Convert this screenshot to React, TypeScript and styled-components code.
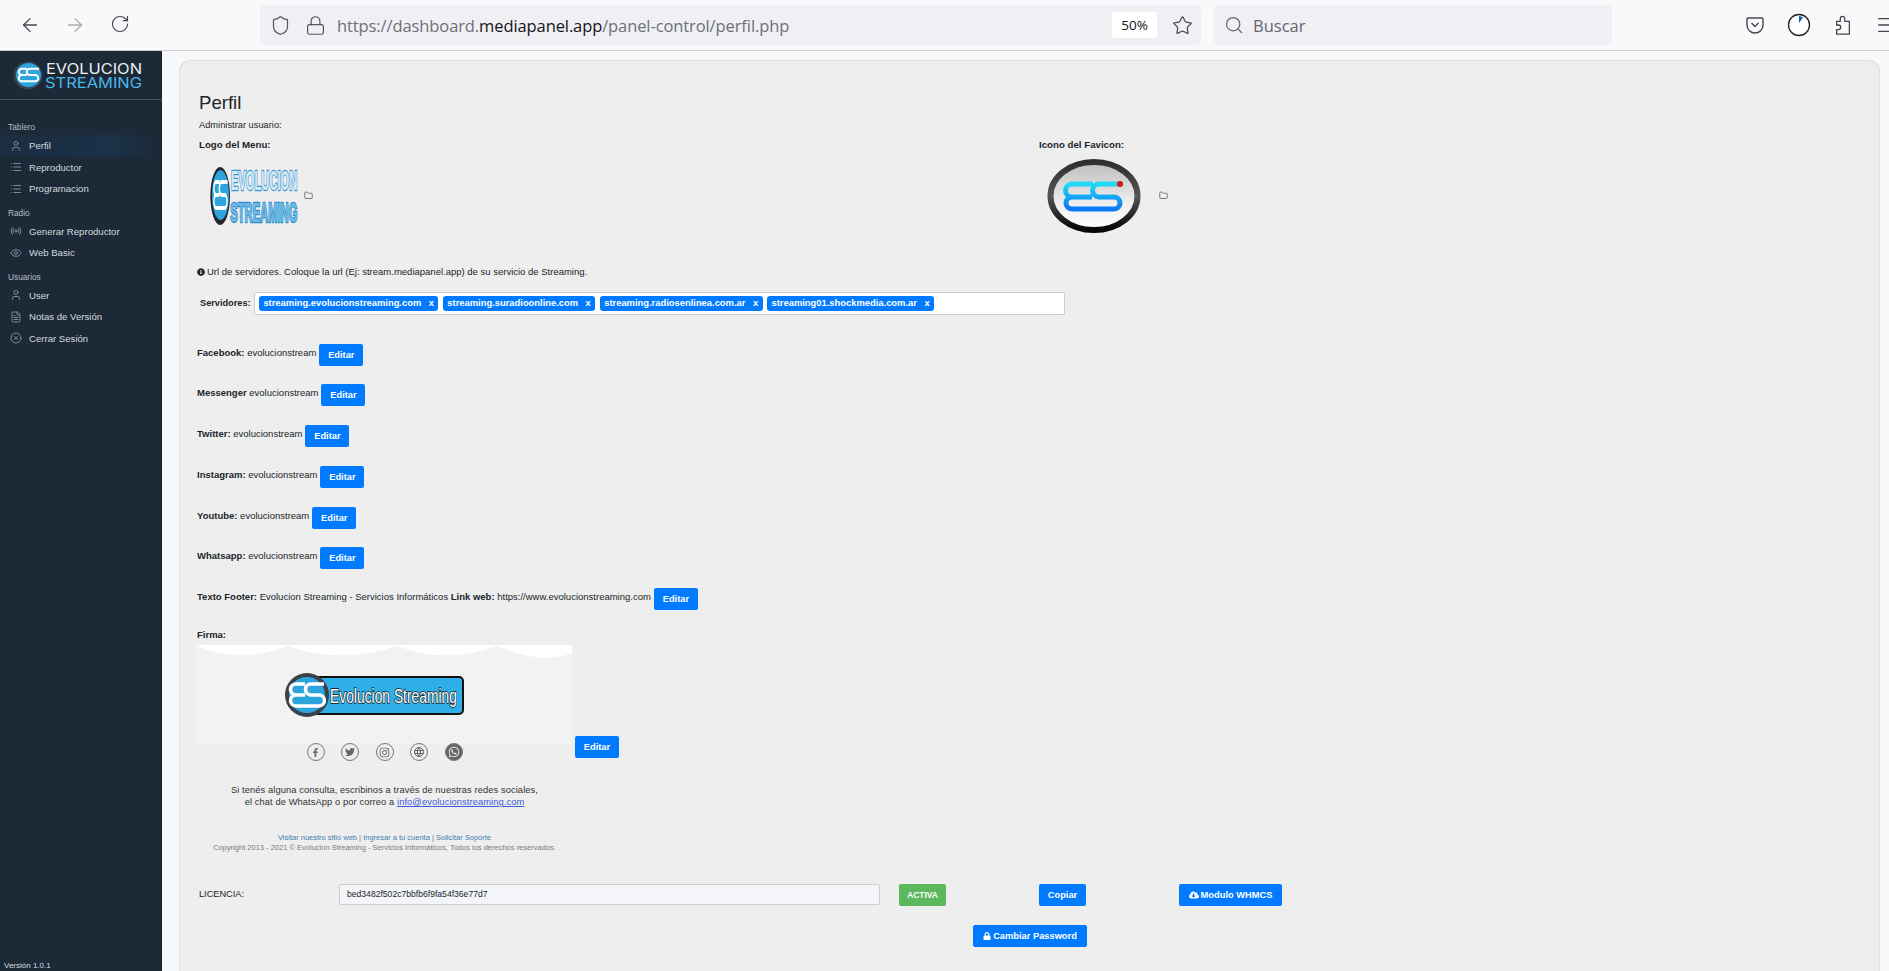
import React from "react";
import styled, { createGlobalStyle } from "styled-components";
import { ArrowLeft, ArrowRight, RotateCw, Shield, Lock, Star, Search, User, List, Radio, Eye, FileText, CircleX, Folder, Menu } from "lucide-react";
import { FaFacebookF, FaTwitter, FaInstagram, FaWhatsapp, FaInfoCircle, FaCloudDownloadAlt, FaLock } from "react-icons/fa";
import { TbWorld } from "react-icons/tb";

const Global = createGlobalStyle`
  html, body { margin: 0; padding: 0; height: 100%; overflow: hidden; background: #f8f9fb; }
  body { font-family: "Liberation Sans", Arial, sans-serif; color: #212529; }
  * { box-sizing: border-box; }
`;

const Page = styled.div`
  width: 1889px; height: 971px; display: flex; flex-direction: column; overflow: hidden;
`;
const Toolbar = styled.header`
  height: 51px; flex: none; display: flex; align-items: center; background: #f9f9fb;
  border-bottom: 1px solid #cfcfd3; color: #44444c; overflow: hidden;
`;
const NavButton = styled.span<{ $faded?: boolean }>`
  width: 45px; display: flex; justify-content: center; color: ${p => (p.$faded ? "#a9a9ad" : "#45454c")};
`;
const NavGroup = styled.div`
  display: flex; flex: none; padding-left: 7px; width: 260px;
`;
const UrlBar = styled.div`
  width: 941px; flex: none; height: 40px; background: #f0f0f4; border-radius: 5px; display: flex; align-items: center; padding-left: 10px;
`;
const UrlIcon = styled.span<{ $w: number }>`
  display: flex; flex: none; width: ${p => p.$w}px; color: #55555c;
`;
const UrlText = styled.div`
  font-family: "Open Sans", sans-serif; font-size: 16.5px; color: #6f6f76; flex: 1; white-space: nowrap; margin-left: 1px; letter-spacing: -0.1px;
  b { font-weight: 400; color: #15141a; }
`;
const ZoomBadge = styled.span`
  width: 45px; flex: none; height: 26px; background: #fff; border-radius: 3px; font-family: "Open Sans", sans-serif; font-size: 13.5px; color: #15141a;
  display: flex; align-items: center; justify-content: center;
`;
const StarBox = styled.span`
  display: flex; flex: none; width: 38px; margin-left: 6px; justify-content: center; color: #4a4a50;
`;
const SearchBar = styled.div`
  width: 398px; flex: none; height: 40px; margin-left: 13px; background: #f0f0f4; border-radius: 5px; display: flex; align-items: center; padding-left: 10px; gap: 9px;
  font-family: "Open Sans", sans-serif; font-size: 16.5px; color: #66666d;
`;
const ToolIcons = styled.div`
  display: flex; flex: none; align-items: center; margin-left: 133px; gap: 22px; color: #45454c;
  svg { flex: none; }
`;
const Main = styled.div`
  flex: 1; display: flex; min-height: 0;
`;
const Sidebar = styled.aside`
  width: 162px; flex: none; background: #1c2936; color: #d8dde2; display: flex; flex-direction: column; font-size: 9.6px;
`;
const Brand = styled.div`
  height: 49px; border-bottom: 1px solid #46525d; padding: 8px 0 0 13px; margin-bottom: 20px;
`;
const NavTitle = styled.div<{ $first?: boolean }>`
  font-size: 8.3px; color: #b5bdc5; padding-left: 8px; height: 14px; line-height: 12px; margin-top: ${p => (p.$first ? 1 : 7)}px;
`;
const NavItem = styled.div<{ $active?: boolean }>`
  height: 21.5px; display: flex; align-items: center; padding-left: 10px; gap: 7px; color: #d3d9df;
  background: ${p => (p.$active ? "linear-gradient(90deg, #1b2d41, #1a3147 70%, #1c2936)" : "transparent")};
  svg { color: #7e8a95; }
`;
const Version = styled.div`
  margin-top: auto; font-size: 8px; padding: 0 0 1px 4px; color: #d8dde2;
`;
const Content = styled.main`
  flex: 1; padding: 10px 10px 0 18px; min-width: 0;
`;
const Card = styled.section`
  background: #eeeeee; border-radius: 10px 10px 0 0; height: 1000px; padding: 32px 0 0 17px;
  box-shadow: 0 0 2px rgba(0, 0, 0, .35); font-size: 9.5px; line-height: 12px;
`;
const Title = styled.h3`
  margin: 0 0 6px 2px; font-weight: 400; font-size: 18.6px; line-height: 20px; color: #212529;
`;
const Note = styled.div`
  margin-left: 2px; font-size: 9.3px;
`;
const LogoGrid = styled.div`
  display: grid; grid-template-columns: 840px 300px; margin: 8px 0 0 2px;
`;
const Strong = styled.span`
  font-weight: 700;
`;
const FieldTitle = styled(Strong)`
  font-size: 9.7px;
`;
const ImageRow = styled.div<{ $inset: number; $gap: number }>`
  height: 74px; margin-top: 7.5px; display: flex; align-items: center; padding-left: ${p => p.$inset}px; gap: ${p => p.$gap}px;
  svg.folder { color: #555; }
`;
const Hint = styled.div`
  display: flex; align-items: center; gap: 2px; margin-top: 33px; font-size: 9.5px; height: 12px;
  svg { color: #212529; }
`;
const ServerRow = styled.div`
  display: flex; align-items: center; margin-top: 14px;
`;
const ServerLabel = styled(Strong)`
  width: 57px; padding-left: 3px; font-size: 9.2px;
`;
const TagBox = styled.div`
  width: 811px; height: 23px; background: #fff; border: 1px solid #c9ccd0; border-radius: 2px; display: flex; align-items: center; padding-left: 4px; gap: 4.6px;
`;
const Tag = styled.span`
  height: 15px; border-radius: 3px; background: #007bff; color: #fff; font-weight: 700; font-size: 9.4px; display: flex; align-items: center; padding: 0 4.4px; white-space: nowrap;
  i { font-style: normal; margin-left: 7.500px; }
`;
const Socials = styled.div`
  display: flex; flex-direction: column; gap: 18.8px; margin-top: 29px;
`;
const SocialRow = styled.div`
  display: flex; align-items: center; height: 22px; gap: 3px; font-size: 9.5px;
`;
const SocialValue = styled.span`
  position: relative; top: -2px;
`;
const BlueButton = styled.button`
  height: 22px; border: 0; border-radius: 2px; background: #007bff; color: #fff; font: 700 9.3px "Liberation Sans", Arial, sans-serif; padding: 0; white-space: nowrap;
  display: inline-flex; align-items: center; justify-content: center; gap: 2px;
`;
const EditButton = styled(BlueButton)`
  width: 44px;
`;
const SignatureLabel = styled(Strong)`
  display: block; margin-top: 19px;
`;
const SignatureRow = styled.div`
  display: flex; gap: 3px; margin-top: 4px;
`;
const SignatureBody = styled.div`
  width: 375px; text-align: center;
`;
const Banner = styled.svg`
  display: block; width: 375px; height: 99px;
`;
const SocialIcons = styled.div`
  display: flex; justify-content: center; gap: 16.5px; height: 16px; align-items: center;
`;
const Round = styled.span<{ $solid?: boolean }>`
  width: 18px; height: 18px; border-radius: 50%; border: 1px solid #777; display: flex; align-items: center; justify-content: center;
  color: ${p => (p.$solid ? "#eee" : "#666")}; background: ${p => (p.$solid ? "#666" : "transparent")};
`;
const SignatureText = styled.p`
  margin: 24px 0 0 0; font-size: 9.3px; line-height: 12px; color: #333; letter-spacing: .1px;
  a { color: #3b5bdb; text-decoration: underline; }
`;
const SignatureLinks = styled.p`
  margin: 25px 0 0 0; font-size: 7.5px; line-height: 10px; color: #7a7a7a;
  span { color: #3f7fb5; }
`;
const SignatureEdit = styled(EditButton)`
  margin-top: 91px;
`;
const LicenseRow = styled.div`
  display: flex; align-items: flex-start; margin-top: 31px; height: 22px;
`;
const LicenseLabel = styled.span`
  width: 142px; padding-left: 2px; font-size: 9.2px; line-height: 20px;
`;
const LicenseInput = styled.div`
  width: 541px; height: 21px; background: #f3f5f8; border: 1px solid #c9ccd0; border-radius: 2px; font-size: 8.6px; line-height: 18px; padding-left: 7px;
`;
const ActiveBadge = styled.span`
  width: 47px; height: 22px; margin-left: 19px; background: #5cb85c; border-radius: 2px; color: #fff; font-weight: 700; font-size: 8.4px; display: flex; align-items: center; justify-content: center;
`;
const CopyButton = styled(BlueButton)`
  width: 47px; margin-left: 93px;
`;
const ModuleButton = styled(BlueButton)`
  width: 103px; margin-left: 93px;
`;
const PasswordButton = styled(BlueButton)`
  display: flex; width: 114px; margin: 19px 0 0 776px;
`;

const LogoMark = ({ w, h, tone }: { w: number; h: number; tone: "side" | "blue" }) => {
  const side = tone === "side";
  return (
    <svg width={w} height={h} viewBox="0 0 130 34" preserveAspectRatio="none">
      <circle cx="15" cy="17" r="14.5" fill={side ? "#37424d" : "#26262a"} />
      <circle cx="15.5" cy="16.5" r="12.5" fill="#2ea4de" />
      <path d="M14 10H9a3.200 3.200 0 0 0 0 6.500 3.200 3.200 0 0 0 0 6.500h13a3.200 3.200 0 0 0 0-6.500h-5a3.200 3.200 0 0 1 0-6.500h9M8 16.500h6" fill="none" stroke="#fff" strokeWidth="2" />
      <text x={side ? 33 : 31} y={side ? 15 : 14} fontFamily={side ? "Inter, sans-serif" : "Liberation Sans, sans-serif"} fontWeight={side ? 400 : 700} fontSize={side ? 14.5 : 13.8}
        textLength={side ? 96 : 98} lengthAdjust="spacingAndGlyphs"
        fill={side ? "#e8eef3" : "#d6ebf8"} stroke={side ? "none" : "#3d93cf"} strokeWidth={side ? 0 : 1.2} paintOrder="stroke">EVOLUCION</text>
      <text x={side ? 32 : 30} y="30" fontFamily={side ? "Inter, sans-serif" : "Liberation Sans, sans-serif"} fontWeight={side ? 400 : 700} fontSize={side ? 14.5 : 13.8}
        textLength={side ? 97 : 99} lengthAdjust="spacingAndGlyphs"
        fill={side ? "#47b7ec" : "#6fb8e6"} stroke={side ? "none" : "#2b8fca"} strokeWidth={side ? 0 : 1.2} paintOrder="stroke">STREAMING</text>
    </svg>
  );
};

const Favicon = () => (
  <svg width="94" height="74" viewBox="0 0 94 74">
    <defs>
      <linearGradient id="fav" x1="0" y1="0" x2="0" y2="1"><stop offset="0" stopColor="#bdbdbd" /><stop offset=".6" stopColor="#eeeeee" /><stop offset="1" stopColor="#ffffff" /></linearGradient>
      <linearGradient id="es" x1="0" y1="0" x2="0" y2="1"><stop offset="0" stopColor="#21dcf8" /><stop offset="1" stopColor="#0a78f5" /></linearGradient>
      <linearGradient id="ring" x1="0" y1="0" x2="0" y2="1"><stop offset="0" stopColor="#2e2e2e" /><stop offset=".5" stopColor="#555" /><stop offset="1" stopColor="#050505" /></linearGradient>
    </defs>
    <ellipse cx="47" cy="37" rx="43.500" ry="34" fill="url(#fav)" stroke="url(#ring)" strokeWidth="6" />
    <path d="M46 25H25a5.500 5.500 0 0 0 0 13h20M25 38a6 6 0 0 0 0 12h42a6 6 0 0 0 0-12H52a6.500 6.500 0 0 1 0-13h24" fill="none" stroke="url(#es)" strokeWidth="5" />
    <circle cx="73" cy="25" r="3" fill="#e21616" />
  </svg>
);

const SignatureArt = () => (
  <Banner viewBox="0 0 375 99">
    <rect width="375" height="99" fill="#f2f2f2" />
    <path d="M0 1Q45 20 90 1Q145 20 200 1Q250 20 300 1Q345 20 375 8V0H0Z" fill="#fff" />
    <rect x="112" y="32" width="154" height="37" rx="4" fill="#2eafe8" stroke="#111" strokeWidth="2" />
    <circle cx="110" cy="50" r="22" fill="#39424b" />
    <circle cx="110" cy="50" r="18" fill="#2ea4de" />
    <path d="M108 39H99a5.200 5.200 0 0 0 0 11 5.200 5.200 0 0 0 0 11h23a5.200 5.200 0 0 0 0-11h-8a5.200 5.200 0 0 1 0-11h13M98 50h10" fill="none" stroke="#fff" strokeWidth="3.500" />
    <text x="133" y="58" fontFamily="Liberation Sans, sans-serif" fontSize="21" textLength="127" lengthAdjust="spacingAndGlyphs" fill="#fff" stroke="#111" strokeWidth="1.500" paintOrder="stroke">Evolucion Streaming</text>
  </Banner>
);

const socials: [string, string][] = [
  ["Facebook:", "evolucionstream"], ["Messenger", "evolucionstream"], ["Twitter:", "evolucionstream"],
  ["Instagram:", "evolucionstream"], ["Youtube:", "evolucionstream"], ["Whatsapp:", "evolucionstream"],
];
const tags = ["streaming.evolucionstreaming.com", "streaming.suradioonline.com", "streaming.radiosenlinea.com.ar", "streaming01.shockmedia.com.ar"];

export default function App() {
  return (
    <Page>
      <Global />
      <Toolbar>
        <NavGroup>
          <NavButton><ArrowLeft size={22} strokeWidth={1.4} /></NavButton>
          <NavButton $faded><ArrowRight size={22} strokeWidth={1.4} /></NavButton>
          <NavButton><RotateCw size={20} strokeWidth={1.4} /></NavButton>
        </NavGroup>
        <UrlBar>
          <UrlIcon $w={35}><Shield size={21} strokeWidth={1.4} /></UrlIcon>
          <UrlIcon $w={31}><Lock size={21} strokeWidth={1.4} /></UrlIcon>
          <UrlText>https://dashboard.<b>mediapanel.app</b>/panel-control/perfil.php</UrlText>
          <ZoomBadge>50%</ZoomBadge>
          <StarBox><Star size={21} strokeWidth={1.4} /></StarBox>
        </UrlBar>
        <SearchBar><Search size={20} strokeWidth={1.5} />Buscar</SearchBar>
        <ToolIcons>
          <svg width="20" height="20" viewBox="0 0 20 20" fill="none" stroke="currentColor" strokeWidth="1.4"><path d="M3 3h14a1 1 0 0 1 1 1v6a8 8 0 0 1-16 0V4a1 1 0 0 1 1-1z" /><path d="M6.500 8l3.500 3.500L13.500 8" /></svg>
          <svg width="24" height="24" viewBox="0 0 24 24"><circle cx="12" cy="12" r="10.500" fill="#fff" stroke="#222" strokeWidth="1.300" /><path d="M12 3v7l4-5.500A9 9 0 0 0 12 3z" fill="#0a5fc4" /></svg>
          <svg width="20" height="24" viewBox="0 0 22 24" fill="none" stroke="currentColor" strokeWidth="1.400"><path d="M4 22h14V8h-5V5a2.500 2.500 0 0 0-5 0v3H4v4h2a2.500 2.500 0 0 1 0 5H4z" /></svg>
          <Menu size={22} strokeWidth={1.4} />
        </ToolIcons>
      </Toolbar>
      <Main>
        <Sidebar>
          <Brand><LogoMark w={130} h={33} tone="side" /></Brand>
          <NavTitle $first>Tablero</NavTitle>
          <NavItem $active><User size={12} />Perfil</NavItem>
          <NavItem><List size={12} />Reproductor</NavItem>
          <NavItem><List size={12} />Programacion</NavItem>
          <NavTitle>Radio</NavTitle>
          <NavItem><Radio size={12} />Generar Reproductor</NavItem>
          <NavItem><Eye size={12} />Web Basic</NavItem>
          <NavTitle>Usuarios</NavTitle>
          <NavItem><User size={12} />User</NavItem>
          <NavItem><FileText size={12} />Notas de Versión</NavItem>
          <NavItem><CircleX size={12} />Cerrar Sesión</NavItem>
          <Version>Versión 1.0.1</Version>
        </Sidebar>
        <Content>
          <Card>
            <Title>Perfil</Title>
            <Note>Administrar usuario:</Note>
            <LogoGrid>
              <div>
                <FieldTitle>Logo del Menu:</FieldTitle>
                <ImageRow $inset={11} $gap={6}>
                  <LogoMark w={88} h={68} tone="blue" />
                  <Folder className="folder" size={9} />
                </ImageRow>
              </div>
              <div>
                <FieldTitle>Icono del Favicon:</FieldTitle>
                <ImageRow $inset={8} $gap={18}>
                  <Favicon />
                  <Folder className="folder" size={9} />
                </ImageRow>
              </div>
            </LogoGrid>
            <Hint><FaInfoCircle size={8} />Url de servidores. Coloque la url (Ej: stream.mediapanel.app) de su servicio de Streaming.</Hint>
            <ServerRow>
              <ServerLabel>Servidores:</ServerLabel>
              <TagBox>
                {tags.map(t => <Tag key={t}>{t}<i>x</i></Tag>)}
              </TagBox>
            </ServerRow>
            <Socials>
              {socials.map(([k, v]) => (
                <SocialRow key={k}>
                  <SocialValue><Strong>{k}</Strong> {v}</SocialValue>
                  <EditButton>Editar</EditButton>
                </SocialRow>
              ))}
              <SocialRow>
                <SocialValue><Strong>Texto Footer:</Strong> Evolucion Streaming - Servicios Informáticos <Strong>Link web:</Strong> https://www.evolucionstreaming.com</SocialValue>
                <EditButton>Editar</EditButton>
              </SocialRow>
            </Socials>
            <SignatureLabel>Firma:</SignatureLabel>
            <SignatureRow>
              <SignatureBody>
                <SignatureArt />
                <SocialIcons>
                  <Round><FaFacebookF size={9} /></Round>
                  <Round><FaTwitter size={10} /></Round>
                  <Round><FaInstagram size={11} /></Round>
                  <Round><TbWorld size={12} /></Round>
                  <Round $solid><FaWhatsapp size={12} /></Round>
                </SocialIcons>
                <SignatureText>
                  Si tenés alguna consulta, escribinos a través de nuestras redes sociales,<br />
                  el chat de WhatsApp o por correo a <a>info@evolucionstreaming.com</a>
                </SignatureText>
                <SignatureLinks>
                  <span>Visitar nuestro sitio web</span> | <span>Ingresar a tu cuenta</span> | <span>Solicitar Soporte</span><br />
                  Copyright 2013 - 2021 © Evolucion Streaming - Servicios Informáticos, Todos los derechos reservados.
                </SignatureLinks>
              </SignatureBody>
              <SignatureEdit>Editar</SignatureEdit>
            </SignatureRow>
            <LicenseRow>
              <LicenseLabel>LICENCIA:</LicenseLabel>
              <LicenseInput>bed3482f502c7bbfb6f9fa54f36e77d7</LicenseInput>
              <ActiveBadge>ACTIVA</ActiveBadge>
              <CopyButton>Copiar</CopyButton>
              <ModuleButton><FaCloudDownloadAlt size={10} />Modulo WHMCS</ModuleButton>
            </LicenseRow>
            <PasswordButton><FaLock size={8} />Cambiar Password</PasswordButton>
          </Card>
        </Content>
      </Main>
    </Page>
  );
}
